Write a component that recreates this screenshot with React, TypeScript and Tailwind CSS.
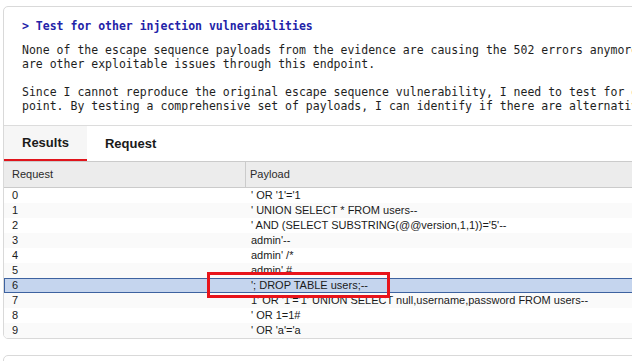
import React from 'react';

const ROWS = [
  "' OR '1'='1",
  "' UNION SELECT * FROM users--",
  "' AND (SELECT SUBSTRING(@@version,1,1))='5'--",
  "admin'--",
  "admin' /*",
  "admin' #",
  "'; DROP TABLE users;--",
  "1' OR '1'='1' UNION SELECT null,username,password FROM users--",
  "' OR 1=1#",
  "' OR 'a'='a",
];

const SELECTED = 6;

export default function App() {
  return (
    <div className="relative w-[632px] h-[361px] overflow-hidden bg-white pt-[6px] pl-[3px]">
      {/* Message card with results table */}
      <div className="w-[720px] rounded-l-[5px] border border-[#d9d9d9] bg-white overflow-hidden">
        <div className="px-[18px] pt-[12px] pb-[12px] whitespace-pre font-['DejaVu_Sans_Mono',monospace] text-[11.5px] leading-[14px] text-[#1e1e1e]">
          <div className="mb-[10px] font-bold text-[#2323a8]">{'> Test for other injection vulnerabilities'}</div>
          <div>None of the escape sequence payloads from the evidence are causing the 502 errors anymore. I should check whether there</div>
          <div>are other exploitable issues through this endpoint.</div>
          <div>&nbsp;</div>
          <div>Since I cannot reproduce the original escape sequence vulnerability, I need to test for other injection types at this end-</div>
          <div>point. By testing a comprehensive set of payloads, I can identify if there are alternative attack vectors available.</div>
        </div>

        {/* Tabs */}
        <div className="flex h-[36px] border-t border-[#dcdcdc] font-['Liberation_Sans',Arial,sans-serif] text-[13px] font-bold text-[#1a1a1a]">
          <div className="flex items-center px-[18px] bg-[#f6f6f6] border-b-2 border-[#e0141b]">Results</div>
          <div className="flex items-center px-[18px]">Request</div>
        </div>

        {/* Table */}
        <div className="font-['Liberation_Sans',Arial,sans-serif] text-[11px] text-[#1a1a1a]">
          <div className="flex h-[27px] border-y border-[#cbcbcb] bg-[#ececec] text-[#2a2a2a]">
            <div className="flex w-[242px] items-center border-r border-[#cbcbcb] pl-[8px]">Request</div>
            <div className="flex items-center pl-[4px]">Payload</div>
          </div>
          {ROWS.map((payload, idx) => (
            <div
              key={idx}
              className={
                idx === SELECTED
                  ? 'flex h-[15px] items-center bg-[#c5d5ee] shadow-[inset_1px_1px_0_#3d62a0,inset_0_-1px_0_#3d62a0]'
                  : idx % 2 === 1
                  ? 'flex h-[15px] items-center bg-[#fafafa]'
                  : 'flex h-[15px] items-center bg-white'
              }
            >
              <div className="w-[242px] pl-[8px]">{idx}</div>
              <div className="pl-[5px] whitespace-pre">{payload}</div>
            </div>
          ))}
        </div>
      </div>

      {/* Next card peeking in */}
      <div className="mt-[16px] h-[40px] w-[720px] rounded-l-[5px] border border-[#d9d9d9] bg-white" />

      {/* Highlight annotation */}
      <div className="absolute left-[207px] top-[272px] h-[26px] w-[183px] border-[3px] border-[#e8141b]" />
    </div>
  );
}
